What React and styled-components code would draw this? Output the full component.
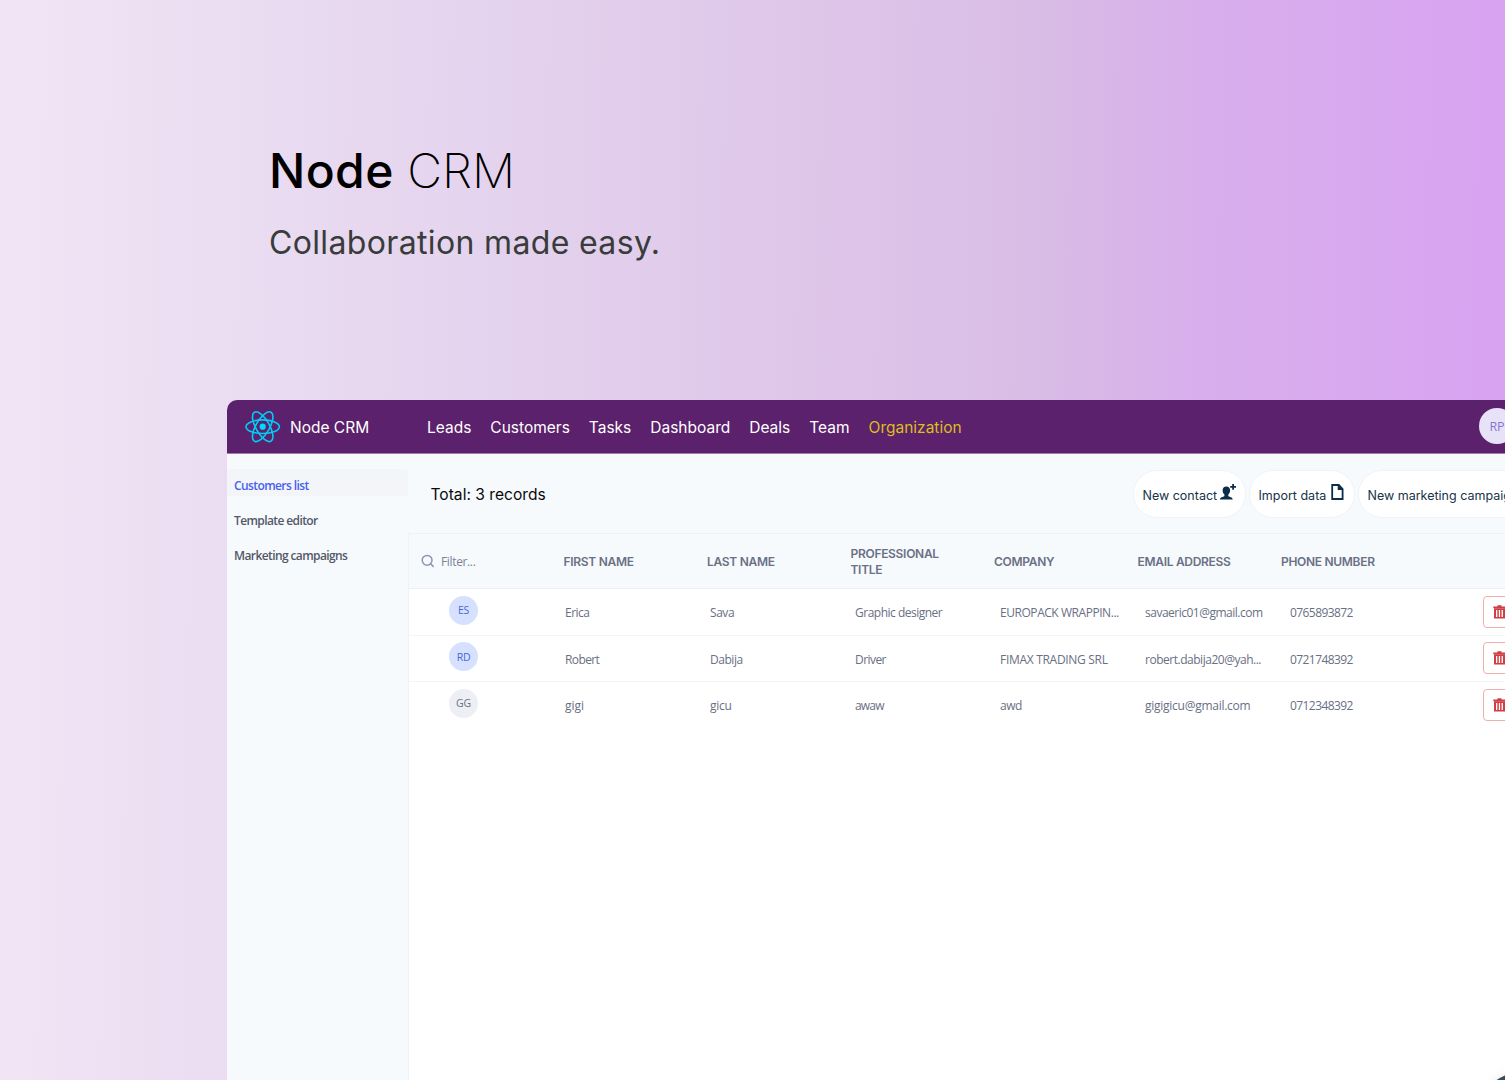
import React from "react";
import styled, { createGlobalStyle } from "styled-components";

const GlobalStyle = createGlobalStyle`
  * { box-sizing: border-box; }
  body { margin: 0; overflow: hidden; }
  button { font: inherit; cursor: pointer; }
`;

const ui = `"Segoe UI", "Open Sans", "Noto Sans", sans-serif`;
const inter = `Inter, "Liberation Sans", sans-serif`;

const Page = styled.div`
  width: 1505px;
  height: 1080px;
  overflow: hidden;
  display: flex;
  flex-direction: column;
  background: linear-gradient(
    90.5deg,
    #f1e5f5 0%,
    #e6d7ef 26%,
    #dfc8ea 50%,
    #d9bde5 68%,
    #d8b5e8 74%,
    #d8aeec 80%,
    #d8a3f2 100%
  );
`;

const Hero = styled.header`
  height: 400px;
  flex: none;
  padding: 141px 0 0 269px;
  font-family: ${inter};
`;

const Title = styled.h1`
  margin: 0;
  font-size: 48px;
  line-height: 60px;
  font-weight: 250;
  letter-spacing: 0;
  color: #000;
  white-space: nowrap;
  strong { font-weight: 550; letter-spacing: 0.4px; }
`;

const Tagline = styled.p`
  margin: 22px 0 0;
  font-size: 32px;
  line-height: 40px;
  font-weight: 380;
  letter-spacing: 0.35px;
  color: #383c3b;
  white-space: nowrap;
`;

const Window = styled.div`
  margin-left: 227px;
  width: 1378px;
  height: 680px;
  flex: none;
  display: flex;
  flex-direction: column;
  overflow: hidden;
  border-radius: 10px 0 0 0;
  background: #f6fafd;
  position: relative;
`;

const TopBar = styled.div`
  height: 54px;
  flex: none;
  display: flex;
  align-items: center;
  padding-left: 18px;
  background: #5b216c;
  border-bottom: 1px solid #a07bac;
  font-family: ${inter};
  font-size: 15.5px;
  color: #fff;
`;

const Brand = styled.div`
  display: flex;
  align-items: center;
  gap: 9px;
  width: 182px;
  svg { display: block; flex: none; }
  span { padding-top: 1px; }
`;

const Nav = styled.nav`
  display: flex;
  gap: 19px;
  flex: 1;
  padding-top: 1px;
`;

const NavLink = styled.a`
  white-space: nowrap;
  color: ${(p) => (p.$accent ? "#dcbd1c" : "#fff")};
`;

const UserAvatar = styled.div`
  width: 36px;
  height: 36px;
  margin: -1px 90px 0 0;
  border-radius: 50%;
  display: flex;
  align-items: center;
  justify-content: center;
  background: #e8e2f8;
  color: #8577cf;
  font: 400 12.5px ${ui};
  letter-spacing: -0.2px;
`;

const Body = styled.div`
  flex: 1;
  display: flex;
  min-height: 0;
`;

const Sidebar = styled.aside`
  width: 181px;
  flex: none;
  padding-top: 15px;
  display: flex;
  flex-direction: column;
  gap: 8px;
`;

const SideItem = styled.a`
  height: 27px;
  padding-left: 7px;
  border-radius: 0 4px 4px 0;
  background: ${(p) => (p.$active ? "#f4f5f9" : "transparent")};
  color: ${(p) => (p.$active ? "#4461f2" : "#535867")};
  font: 600 12px/34px ${ui};
  letter-spacing: -0.6px;
  white-space: nowrap;
`;

const Main = styled.main`
  flex: 1;
  display: flex;
  flex-direction: column;
`;

const Toolbar = styled.div`
  height: 79px;
  flex: none;
  display: flex;
  align-items: center;
  padding-left: 22.5px;
  font-family: ${inter};
`;

const Total = styled.div`
  width: 702px;
  flex: none;
  padding-top: 1px;
  font-size: 15.6px;
  color: #0a0a0a;
`;

const Actions = styled.div`
  display: flex;
  gap: 3px;
`;

const Pill = styled.button`
  height: 48px;
  width: ${(p) => p.$w}px;
  flex: none;
  display: flex;
  align-items: center;
  gap: ${(p) => p.$gap || 3}px;
  padding: 3px 0 0 9px;
  border: 1px solid #eff3f8;
  border-radius: 24px;
  background: #fff;
  color: #183348;
  font-family: ${inter};
  font-size: 12.5px;
  white-space: nowrap;
  svg { flex: none; margin-top: -6px; }
`;

const Table = styled.section`
  flex: 1;
  display: flex;
  flex-direction: column;
  background: #fff;
  border-left: 1px solid #eff3f7;
`;

const HeadRow = styled.div`
  height: 56px;
  flex: none;
  display: grid;
  grid-template-columns: 154.5px repeat(6, 143.5px);
  align-items: center;
  background: #f6fafd;
  border-top: 1px solid #eef2f6;
  border-bottom: 1px solid #ebeff3;
`;

const HeadCell = styled.div`
  width: 110px;
  padding-top: 1px;
  font: 600 12px/16px ${inter};
  letter-spacing: -0.3px;
  color: #6a7086;
`;

const Filter = styled.label`
  display: flex;
  align-items: center;
  gap: 6px;
  padding-left: 12px;
  font: 400 12px/16px ${ui};
  letter-spacing: -0.35px;
  color: #7b8296;
  span { padding-top: 2px; }
`;

const Row = styled.div`
  height: 46.5px;
  flex: none;
  display: grid;
  grid-template-columns: 156px repeat(5, 145px) 193px 44px;
  align-items: center;
  border-bottom: 1px solid ${(p) => (p.$last ? "transparent" : "#f2f4f6")};
`;

const Avatar = styled.div`
  width: 29px;
  height: 29px;
  margin: -3px 0 0 40px;
  border-radius: 50%;
  display: flex;
  align-items: center;
  justify-content: center;
  background: ${(p) => (p.$blue ? "#d6e0ff" : "#edeff5")};
  color: ${(p) => (p.$blue ? "#4868cf" : "#6a7086")};
  font: 400 10.5px ${ui};
  letter-spacing: -0.2px;
`;

const Cell = styled.div`
  padding-top: 2.6px;
  font: 400 12px/16px ${ui};
  letter-spacing: ${(p) => p.$track}px;
  color: #696f84;
  white-space: nowrap;
`;

const DeleteButton = styled.button`
  width: 44px;
  height: 32px;
  padding: 0 0 0 9px;
  display: flex;
  align-items: center;
  border: 1px solid #f1aeb0;
  border-radius: 4px;
  background: #fff;
`;

const ChatBubble = styled.div`
  position: absolute;
  left: 1259px;
  top: 674px;
  width: 56px;
  height: 56px;
  border-radius: 50%;
  background: #394b5c;
  box-shadow: 0 1px 12px rgba(0, 0, 0, 0.1);
`;

const ReactLogo = () => (
  <svg width="36" height="34" viewBox="-17.700 -16.700 36 34" fill="none" stroke="#00cdf7" strokeWidth="1.600">
    <circle r="3.1" fill="#00d8ff" stroke="none" />
    <ellipse rx="16.700" ry="6.800" />
    <ellipse rx="16.700" ry="6.800" transform="rotate(60)" />
    <ellipse rx="16.700" ry="6.800" transform="rotate(120)" />
  </svg>
);

const PersonAddIcon = () => (
  <svg width="16" height="16" viewBox="0 0 16 16" fill="#0b2c4a">
    <path d="M6.3 2.6c2.3 0 3.8 1.6 3.8 4 0 1.7-.7 3.2-1.8 4v1.3c.2.8 3.9 1 4.2 2.7.1.4.1.8.1 1H0c0-.3 0-.7.1-1 .4-1.700 4.100-1.900 4.300-2.700v-1.300c-1.100-.8-1.800-2.300-1.800-4 0-2.400 1.400-4 3.700-4z" />
    <path d="M12.200 0h1.800v2h2v1.800h-2v2h-1.800v-2h-2V2h2z" />
  </svg>
);

const FileIcon = () => (
  <svg width="13" height="16" viewBox="0 0 13 16" fill="none" stroke="#0b2c4a" strokeWidth="1.800">
    <path d="M1.200 1H7.800L11.600 5V15H1.200Z" />
    <path d="M7.300 1V5.500H11.600" fill="#0b2c4a" strokeWidth="1.200" />
  </svg>
);

const SearchIcon = () => (
  <svg width="14" height="14" viewBox="0 0 14 14" fill="none" stroke="#8f92b4" strokeWidth="1.500">
    <circle cx="6.100" cy="6.300" r="4.900" />
    <path d="M9.600 9.800L12.200 12.400" strokeLinecap="round" />
  </svg>
);

const TrashIcon = () => (
  <svg width="13" height="14" viewBox="0 0 13 14" fill="#d03e43">
    <path d="M4.500 0.300h4v1.200h4.200v1.800H0.300V1.500h4.200z" />
    <path fillRule="evenodd" d="M1 3.300h11v10.200H1zM3 5v7h1.300V5zM5.800 5v7h1.300V5zM8.600 5v7h1.300V5z" />
  </svg>
);

const navItems = ["Leads", "Customers", "Tasks", "Dashboard", "Deals", "Team", "Organization"];
const columns = ["FIRST NAME", "LAST NAME", "PROFESSIONAL TITLE", "COMPANY", "EMAIL ADDRESS", "PHONE NUMBER"];
const records = [
  {
    initials: "ES",
    blue: true,
    cells: [["Erica", -0.5], ["Sava", -0.45], ["Graphic designer", -0.5], ["EUROPACK WRAPPIN...", -0.45], ["savaeric01@gmail.com", -0.5], ["0765893872", -0.58]],
  },
  {
    initials: "RD",
    blue: true,
    cells: [["Robert", -0.6], ["Dabija", -0.45], ["Driver", -0.55], ["FIMAX TRADING SRL", -0.3], ["robert.dabija20@yah...", -0.48], ["0721748392", -0.58]],
  },
  {
    initials: "GG",
    blue: false,
    cells: [["gigi", 0], ["gicu", -0.3], ["awaw", -0.8], ["awd", -0.5], ["gigigicu@gmail.com", -0.26], ["0712348392", -0.58]],
  },
];

export default function App() {
  return (
    <Page>
      <GlobalStyle />
      <Hero>
        <Title><strong>Node</strong> CRM</Title>
        <Tagline>Collaboration made easy.</Tagline>
      </Hero>
      <Window>
        <TopBar>
          <Brand><ReactLogo /><span>Node CRM</span></Brand>
          <Nav>
            {navItems.map((n) => (
              <NavLink key={n} $accent={n === "Organization"}>{n}</NavLink>
            ))}
          </Nav>
          <UserAvatar>RP</UserAvatar>
        </TopBar>
        <Body>
          <Sidebar>
            <SideItem $active>Customers list</SideItem>
            <SideItem>Template editor</SideItem>
            <SideItem>Marketing campaigns</SideItem>
          </Sidebar>
          <Main>
            <Toolbar>
              <Total>Total: 3 records</Total>
              <Actions>
                <Pill $w={113}>New contact<PersonAddIcon /></Pill>
                <Pill $w={106} $gap={5}>Import data<FileIcon /></Pill>
                <Pill $w={190}>New marketing campaign</Pill>
              </Actions>
            </Toolbar>
            <Table>
              <HeadRow>
                <Filter><SearchIcon /><span>Filter...</span></Filter>
                {columns.map((c) => <HeadCell key={c}>{c}</HeadCell>)}
              </HeadRow>
              {records.map((r, i) => (
                <Row key={r.initials} $last={i === records.length - 1}>
                  <Avatar $blue={r.blue}>{r.initials}</Avatar>
                  {r.cells.map(([text, track]) => <Cell key={text} $track={track}>{text}</Cell>)}
                  <DeleteButton aria-label="Delete"><TrashIcon /></DeleteButton>
                </Row>
              ))}
            </Table>
          </Main>
        </Body>
        <ChatBubble />
      </Window>
    </Page>
  );
}
